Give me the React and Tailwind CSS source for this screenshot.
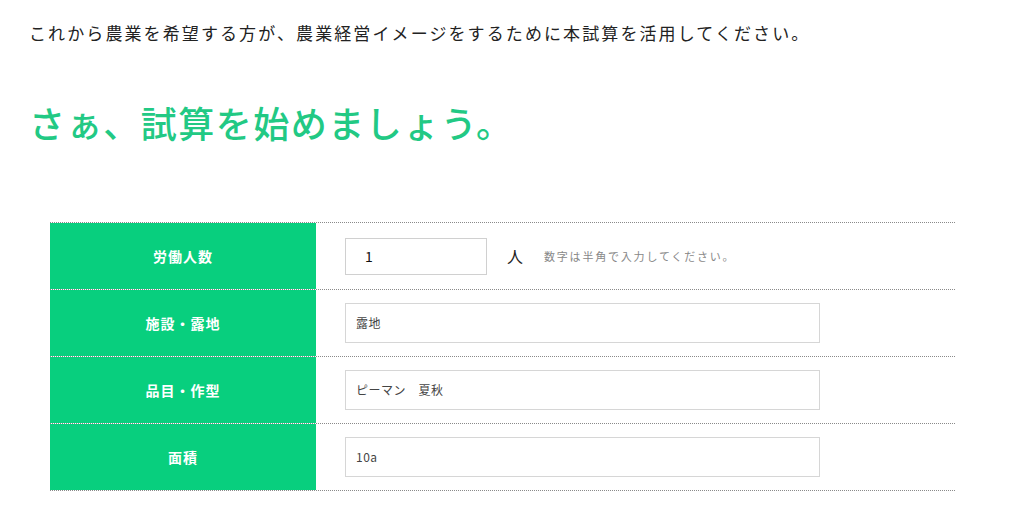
import React from "react";

const font = { fontFamily: '"Noto Sans CJK JP", "Noto Sans", sans-serif' };

function Row({ label, children }) {
  return (
    <div className="grid grid-cols-[266px_1fr] h-[67px] border-b border-dotted border-[#8a8a8a]">
      <div className="bg-[#08cf7e] flex items-center justify-center text-white font-bold text-[14px] tracking-[1px]">
        {label}
      </div>
      <div className="flex items-center pl-[29px]">{children}</div>
    </div>
  );
}

function Field({ value }) {
  return (
    <div className="w-[475px] h-[40px] border border-[#d6d6d6] flex items-center pl-[10px] text-[12px] text-[#444] tracking-[0.5px]">
      {value}
    </div>
  );
}

export default function App() {
  return (
    <div className="w-[1024px] h-[529px] bg-white overflow-hidden" style={font}>
      <p className="pt-[20px] pl-[29px] text-[17px] leading-[26px] tracking-[2.1px] text-[#222]">
        これから農業を希望する方が、農業経営イメージをするために本試算を活用してください。
      </p>
      <h1 className="mt-[51px] pl-[29px] text-[36px] leading-[50px] tracking-[1.5px] text-[#22c984] font-medium">
        さぁ、試算を始めましょう。
      </h1>
      <div className="mt-[75px] ml-[50px] w-[905px] border-t border-dotted border-[#8a8a8a]">
        <Row label="労働人数">
          <div className="w-[142px] h-[37px] border border-[#d0d0d0] flex items-center pl-[19px] text-[14px] text-[#111]">
            1
          </div>
          <span className="ml-[20px] text-[16px] text-[#222]">人</span>
          <span className="ml-[21px] text-[11px] text-[#888] tracking-[1.8px]">
            数字は半角で入力してください。
          </span>
        </Row>
        <Row label="施設・露地">
          <Field value="露地" />
        </Row>
        <Row label="品目・作型">
          <Field value="ピーマン　夏秋" />
        </Row>
        <Row label="面積">
          <Field value="10a" />
        </Row>
      </div>
    </div>
  );
}
